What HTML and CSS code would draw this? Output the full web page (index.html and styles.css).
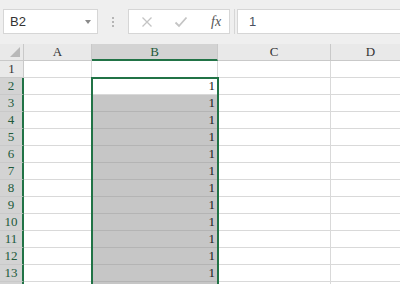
FILE: index.html
```html
<!DOCTYPE html>
<html lang="en">

<head>
    <meta charset="UTF-8">
    <meta name="viewport" content="width=device-width, initial-scale=1.0">
    <title>Sheet</title>
    <link rel="stylesheet" href="styles.css">
</head>

<body>
    <div class="toolbar">
        <div class="name-box">
            <span>B2</span>
            <span class="arrow"></span>
        </div>
        <div class="grip"><i></i><i></i><i></i></div>
        <div class="formula-btns">
            <svg width="12" height="12" viewBox="0 0 12 12">
                <path d="M1.5 1.5 L10.5 10.5 M10.5 1.5 L1.5 10.5" stroke="#c4c4c4" stroke-width="1.3" fill="none" />
            </svg>
            <svg width="14" height="12" viewBox="0 0 14 12">
                <path d="M1.5 6.5 L5 10 L12.5 1.5" stroke="#c4c4c4" stroke-width="1.8" fill="none" />
            </svg>
            <span class="fx">fx</span>
        </div>
        <div class="sep"></div>
        <div class="formula">1</div>
    </div>

    <div class="sheet">
        <div class="grid"></div>
        <div class="selection"></div>
    </div>

    <script>
        const grid = document.querySelector('.grid');
        const cols = ['A', 'B', 'C', 'D'];

        const corner = document.createElement('div');
        corner.className = 'cell head corner';
        grid.appendChild(corner);

        cols.forEach((c) => {
            const h = document.createElement('div');
            h.className = 'cell head';
            if (c === 'B') h.classList.add('active');
            h.innerText = c;
            grid.appendChild(h);
        });

        for (let r = 1; r <= 14; r++) {
            const rh = document.createElement('div');
            rh.className = 'cell rowhead';
            if (r >= 2) rh.classList.add('active');
            // row 14 only peeks in at the bottom edge, keep it empty
            if (r <= 13) rh.innerText = r;
            grid.appendChild(rh);

            cols.forEach((c) => {
                const cell = document.createElement('div');
                cell.className = 'cell';
                if (c === 'B' && r >= 2) {
                    if (r <= 13) cell.innerText = '1';
                    cell.classList.add('num');
                    if (r >= 3) cell.classList.add('picked');
                }
                grid.appendChild(cell);
            });
        }
    </script>
</body>

</html>
```

FILE: styles.css
```css
* {
    margin: 0;
    padding: 0;
    box-sizing: border-box;
}

body {
    width: 400px;
    height: 284px;
    overflow: hidden;
    background-color: white;
    font-family: "Liberation Sans", Arial, sans-serif;
}

.toolbar {
    height: 44px;
    background-color: #efefef;
    display: flex;
    align-items: flex-start;
    padding-top: 9px;
    padding-left: 3px;
}

.name-box {
    width: 95px;
    height: 25px;
    background-color: white;
    border: 1px solid #d6d6d6;
    display: flex;
    align-items: center;
    justify-content: space-between;
    padding: 0 6px 0 6px;
    font-size: 13px;
    color: #333;
}

.arrow {
    width: 0;
    height: 0;
    border-left: 3px solid transparent;
    border-right: 3px solid transparent;
    border-top: 4px solid #8a8a8a;
}

.grip {
    width: 30px;
    height: 25px;
    display: flex;
    flex-direction: column;
    align-items: center;
    justify-content: center;
    gap: 2px;
}

.grip i {
    width: 2px;
    height: 2px;
    background-color: #b5b5b5;
}

.formula-btns {
    width: 102px;
    height: 25px;
    background-color: white;
    border: 1px solid #d6d6d6;
    display: flex;
    align-items: center;
    padding-left: 12px;
    gap: 21px;
}

.fx {
    font-family: "Liberation Serif", serif;
    font-style: italic;
    font-size: 14px;
    color: #555;
    margin-left: 2px;
}

.sep {
    width: 5px;
    height: 25px;
    border-right: 1px solid #d6d6d6;
    margin-right: 2px;
}

.formula {
    flex: 1;
    height: 25px;
    background-color: white;
    border: 1px solid #d6d6d6;
    border-right: none;
    font-size: 13px;
    color: #4a5060;
    line-height: 23px;
    padding-left: 11px;
}

.sheet {
    position: relative;
}

.grid {
    display: grid;
    grid-template-columns: 24px 68px 126px 113px 80px;
    grid-auto-rows: 17px;
}

.cell {
    border-right: 1px solid #d9d9d9;
    border-bottom: 1px solid #d9d9d9;
    font-family: "Liberation Serif", serif;
    font-size: 13px;
    line-height: 16px;
    color: #222;
}

.head {
    background-color: #e9e9e9;
    border-right-color: #c9c9c9;
    border-bottom-color: #c9c9c9;
    text-align: center;
    color: #333;
}

.head.active {
    background-color: #d3d3d3;
    border-bottom: 2px solid #217346;
    color: #215a3a;
    line-height: 15px;
}

.corner {
    position: relative;
}

.corner::after {
    content: '';
    position: absolute;
    right: 3px;
    bottom: 3px;
    width: 0;
    height: 0;
    border-left: 10px solid transparent;
    border-bottom: 10px solid #b8b8b8;
}

.rowhead {
    background-color: #e9e9e9;
    border-right-color: #c9c9c9;
    border-bottom-color: #c9c9c9;
    text-align: center;
    color: #333;
}

.rowhead.active {
    background-color: #d3d3d3;
    border-right: 2px solid #217346;
    color: #215a3a;
}

.num {
    text-align: right;
    padding-right: 2px;
}

.picked {
    background-color: #c6c6c6;
    border-bottom-color: #b4b4b4;
}

.selection {
    position: absolute;
    left: 91px;
    top: 33px;
    width: 128px;
    height: 260px;
    border: 2px solid #217346;
}
```
